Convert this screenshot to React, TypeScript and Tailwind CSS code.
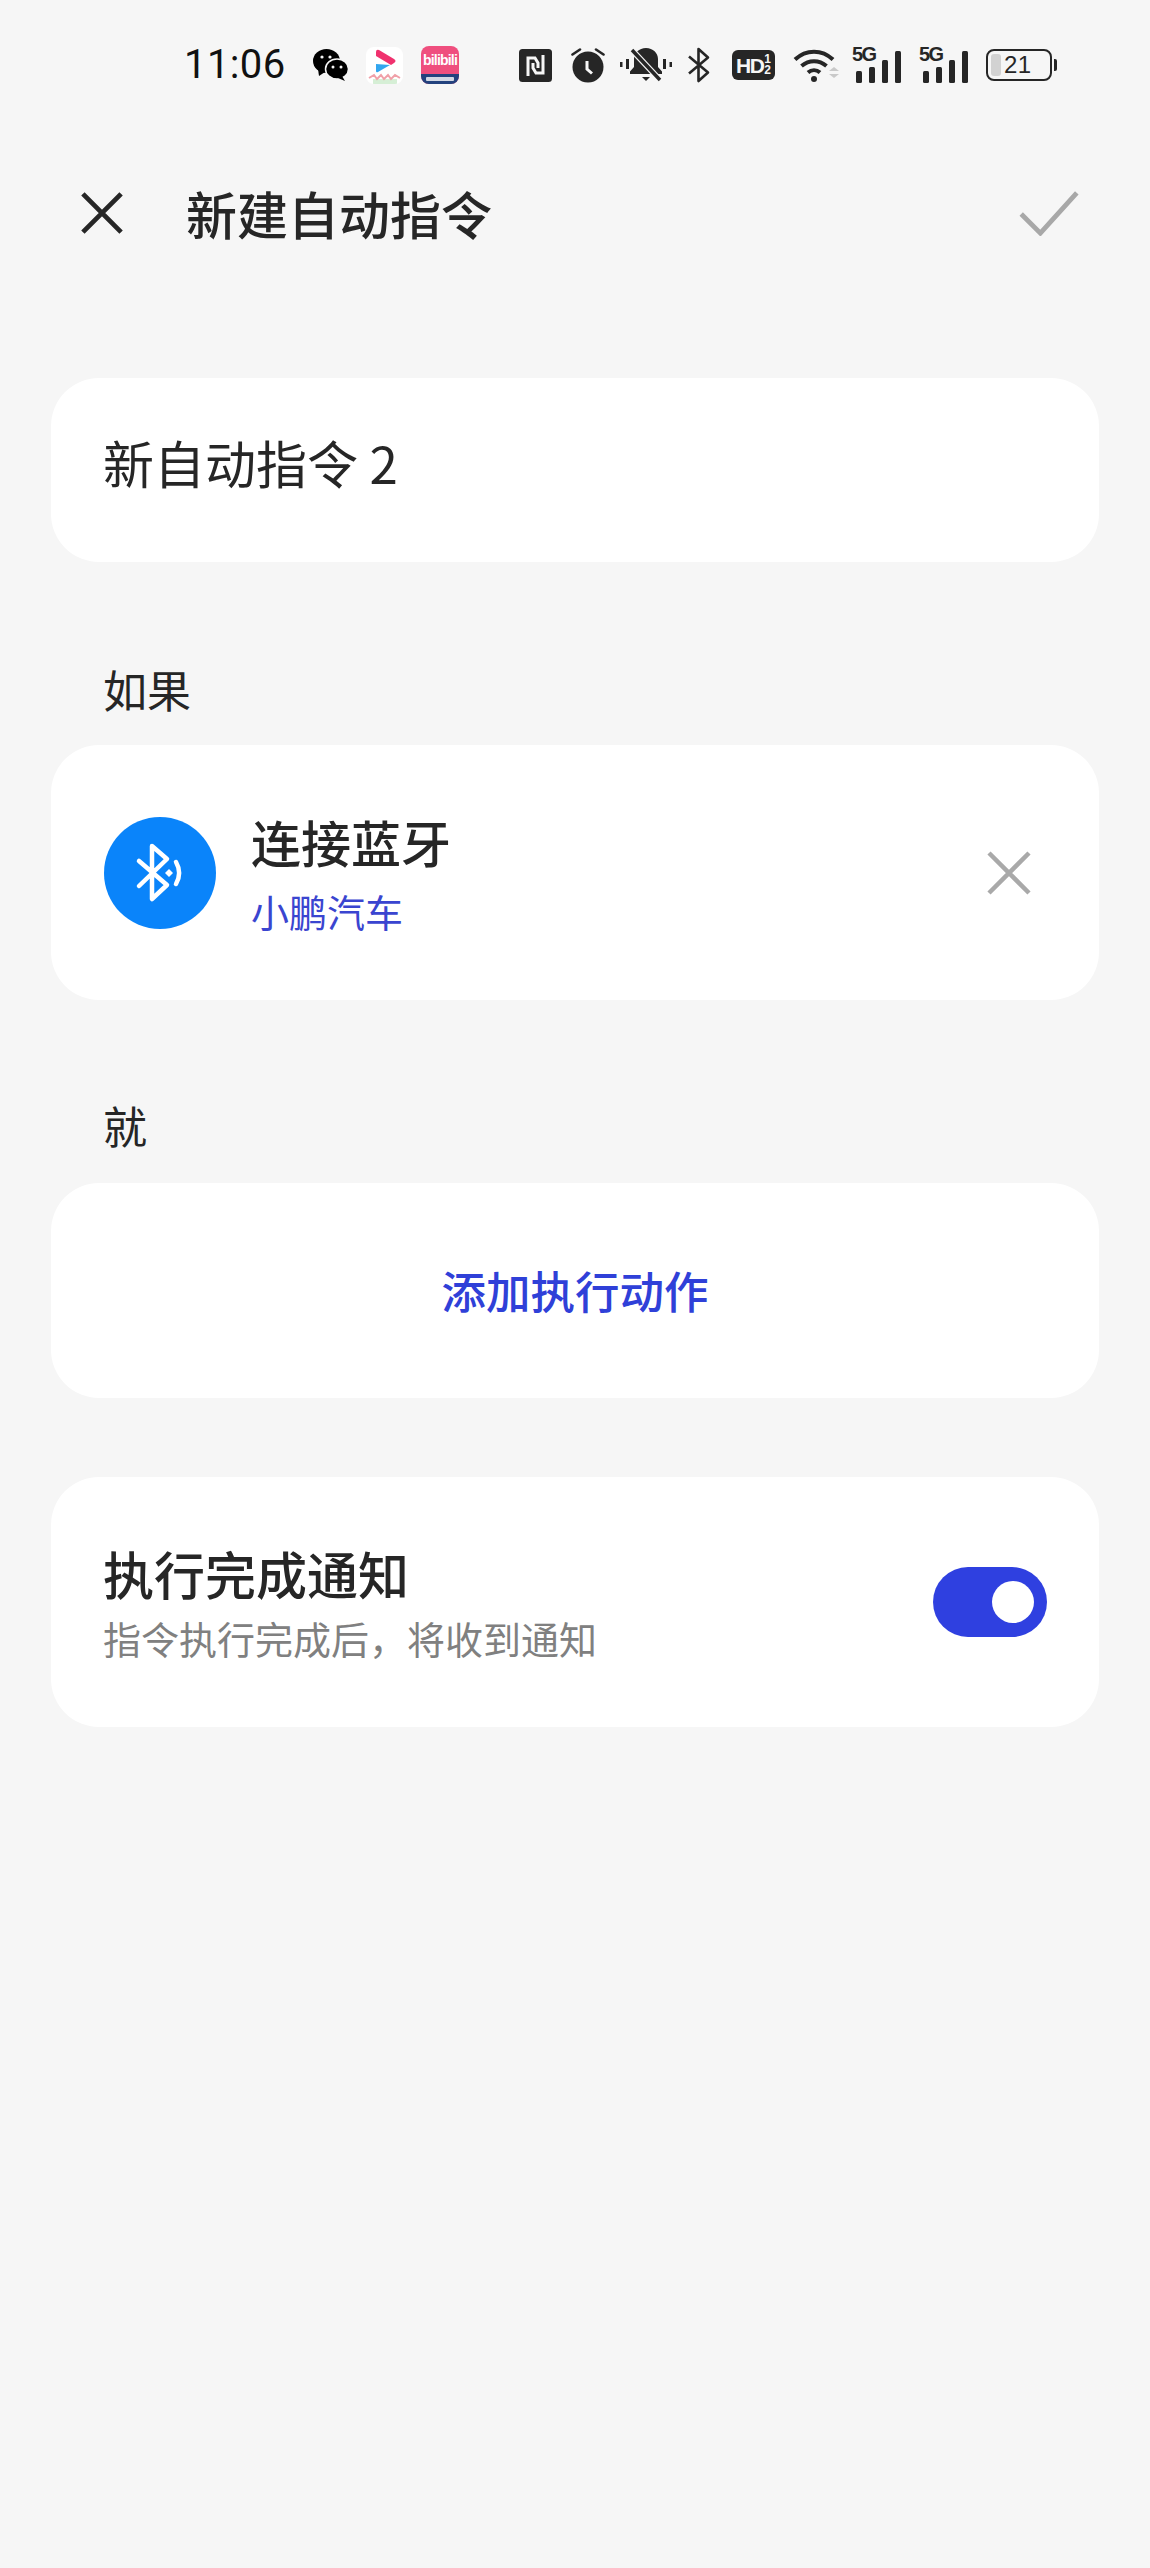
const FONT = "font-['Noto_Sans_CJK_SC','Noto_Sans',sans-serif]";

function WeChat() {
  return (
    <svg width="38" height="34" viewBox="0 0 38 34" className="ml-[25px]">
      <ellipse cx="14.5" cy="13" rx="13.5" ry="12" fill="#000" />
      <path d="M6 21l1 7 6-4z" fill="#000" />
      <ellipse cx="25" cy="21" rx="11.5" ry="10" fill="#000" stroke="#f6f6f6" strokeWidth="1.5" />
      <path d="M30 28l3 5-7-3z" fill="#000" />
      <circle cx="10" cy="9" r="1.6" fill="#f6f6f6" />
      <circle cx="18" cy="9" r="1.6" fill="#f6f6f6" />
      <circle cx="21" cy="19" r="1.5" fill="#f6f6f6" />
      <circle cx="29" cy="19" r="1.5" fill="#f6f6f6" />
    </svg>
  );
}

function VideoApp() {
  return (
    <div className="ml-[16px] w-[37px] h-[37px] rounded-[8px] bg-white overflow-hidden">
      <svg width="37" height="37" viewBox="0 0 37 37">
        <path d="M10 5q0-3 3-2l15 9q3 2 0 4l-3 2-15-9z" fill="#f0316e" />
        <path d="M10 17l14 1-12 7q-2 1-2-1z" fill="#32a6ef" />
        <rect x="7" y="32" width="24" height="5" fill="#d6efd6" />
        <path d="M3 31l5-3 3 4 4-4 3 4 4-4 3 4 4-4 5 3" fill="none" stroke="#f0a0a8" strokeWidth="2" />
      </svg>
    </div>
  );
}

function BiliApp() {
  return (
    <div className="ml-[18px] w-[38px] h-[38px] rounded-[8px] bg-[#ef4f7e] flex flex-col items-center overflow-hidden">
      <span className="font-['Liberation_Sans',sans-serif] text-white text-[14px] font-bold leading-[28px] h-[28px] tracking-[-0.8px]">bilibili</span>
      <div className="w-full flex-1 bg-[#23427e] flex items-center justify-center">
        <div className="w-[28px] h-[4px] bg-white/80 rounded-[1px]" />
      </div>
    </div>
  );
}

function NfcIcon() {
  return (
    <svg width="33" height="33" viewBox="0 0 33 33" className="ml-[60px]">
      <rect width="33" height="33" rx="3.5" fill="#262626" />
      <path d="M9 27V9h7l3 5v5M24 6v18h-7l-3-5v-5" fill="none" stroke="#f6f6f6" strokeWidth="3" />
    </svg>
  );
}

function AlarmIcon() {
  return (
    <svg width="34" height="36" viewBox="0 0 34 36" className="ml-[19px]">
      <circle cx="17" cy="20" r="15.5" fill="#262626" />
      <path d="M1.5 7.5L9 2.5M32.5 7.5L25 2.5" stroke="#262626" strokeWidth="2.6" strokeLinecap="round" />
      <path d="M16 14v8l5 4.500" fill="none" stroke="#f6f6f6" strokeWidth="3" />
    </svg>
  );
}

function MutedBell() {
  return (
    <svg width="52" height="36" viewBox="0 0 52 36" className="ml-[15px]">
      <path d="M10 27h32v-2.500l-4-4.500v-8c0-6-5-11-12-11S14 6 14 12v8l-4 4.500z" fill="#262626" />
      <path d="M22 30h8l-4 4z" fill="#262626" />
      <path d="M11 2l28 30" stroke="#f6f6f6" strokeWidth="6" />
      <path d="M12 3l28 30" stroke="#262626" strokeWidth="3.500" />
      <rect x="0" y="15" width="2.500" height="5" fill="#262626" />
      <rect x="6" y="12" width="3" height="10" fill="#262626" />
      <rect x="43" y="12" width="3" height="10" fill="#262626" />
      <rect x="49.500" y="15" width="2.500" height="5" fill="#262626" />
    </svg>
  );
}

function BluetoothGlyph() {
  return (
    <svg width="23" height="36" viewBox="0 0 23 36" className="ml-[15px]">
      <path d="M2 9.500l19 16-9.500 8.500V2l9.500 8.500L2 26.500" fill="none" stroke="#262626" strokeWidth="2.600" strokeLinejoin="round" />
    </svg>
  );
}

function HdBadge() {
  return (
    <div className="ml-[22px] w-[43px] h-[30px] rounded-[6px] bg-[#262626] flex items-center justify-center gap-[1px] text-[#f6f6f6] font-['Liberation_Sans',sans-serif] font-bold">
      <span className="text-[21px] leading-none tracking-[-1.5px]">HD</span>
      <span className="flex flex-col items-center text-[12px] leading-[11px]">
        <span>1</span>
        <span>2</span>
      </span>
    </div>
  );
}

function WifiIcon() {
  return (
    <svg width="46" height="36" viewBox="0 0 46 36" className="ml-[18px]">
      <path d="M2 12.500c11-10.500 27-10.500 38 0" fill="none" stroke="#262626" strokeWidth="4" />
      <path d="M8.500 19c7.500-6.500 17.500-6.500 25 0" fill="none" stroke="#262626" strokeWidth="4" />
      <path d="M15 25.500c3.500-3 8.500-3 12 0" fill="none" stroke="#262626" strokeWidth="4" />
      <circle cx="21" cy="32" r="3" fill="#262626" />
      <path d="M36 24l5-4 5 4zM36 27l5 4 5-4z" fill="#c9c9c9" />
    </svg>
  );
}

function Signal({ className }: { className: string }) {
  return (
    <div className={`relative w-[50px] h-[36px] ${className}`}>
      <div className="absolute inset-0 flex items-end justify-between pl-[4px] pr-[1px]">
        <div className="w-[6px] h-[12px] rounded-[1.5px] bg-[#262626]" />
        <div className="w-[6px] h-[16px] rounded-[1.5px] bg-[#262626]" />
        <div className="w-[6px] h-[23px] rounded-[1.5px] bg-[#262626]" />
        <div className="w-[6px] h-[32px] rounded-[1.5px] bg-[#262626]" />
      </div>
      <span className="absolute left-0 top-[-2px] font-['Liberation_Sans',sans-serif] font-bold text-[20px] leading-[18px] tracking-[-1.5px] text-[#262626]">5G</span>
    </div>
  );
}

function Battery() {
  return (
    <div className="ml-[17px] flex items-center">
      <div className="w-[66px] h-[32px] rounded-[8px] border-[2px] border-[#262626] pl-[3px] py-[3px] flex items-center">
        <div className="w-[10px] h-full rounded-[3px] bg-[#d2d2d2]" />
        <span className="ml-[3px] font-['Liberation_Sans',sans-serif] text-[24px] leading-none tracking-[0.5px] text-[#262626]">21</span>
      </div>
      <div className="ml-[2px] w-[3px] h-[12px] rounded-r-[2px] bg-[#262626]" />
    </div>
  );
}

function StatusBar() {
  return (
    <div className="h-[130px] pl-[184px] flex items-center">
      <span className="font-['Roboto',sans-serif] text-[40px] leading-none tracking-[0.4px] text-[#111] w-[103px]">11:06</span>
      <WeChat />
      <VideoApp />
      <BiliApp />
      <NfcIcon />
      <AlarmIcon />
      <MutedBell />
      <BluetoothGlyph />
      <HdBadge />
      <WifiIcon />
      <Signal className="ml-[13px]" />
      <Signal className="ml-[17px]" />
      <Battery />
    </div>
  );
}

function Cross({ size, color, weight }: { size: number; color: string; weight: number }) {
  return (
    <svg width={size} height={size} viewBox="0 0 44 44">
      <path d="M2 2l40 40M42 2L2 42" stroke={color} strokeWidth={weight} fill="none" />
    </svg>
  );
}

function BluetoothBadge() {
  return (
    <div className="w-[112px] h-[112px] rounded-full bg-[#0a84fa] shrink-0">
      <svg width="112" height="112" viewBox="0 0 112 112">
        <path d="M35 44l28 24-15 14V29l15 13-28 27" fill="none" stroke="#fff" strokeWidth="4.500" strokeLinejoin="round" strokeLinecap="round" />
        <path d="M65 52l4 4-4 4-4-4z" fill="#fff" />
        <path d="M72 45c4 7 4 15 0 22" fill="none" stroke="#fff" strokeWidth="4.500" strokeLinecap="round" />
      </svg>
    </div>
  );
}

export default function App() {
  return (
    <div className={`w-[1150px] h-[2568px] bg-[#f6f6f6] text-[#262626] ${FONT}`}>
      <StatusBar />

      <header className="h-[166px] pl-[81px] pr-[71px] flex items-center">
        <Cross size={42} color="#262626" weight={5} />
        <h1 className="ml-[63px] text-[51px] leading-none font-medium">新建自动指令</h1>
        <svg width="60" height="46" viewBox="0 0 62 48" className="ml-auto">
          <path d="M2 25l20 20L60 3" fill="none" stroke="#a8a8a8" strokeWidth="5" />
        </svg>
      </header>

      <main className="px-[51px] pt-[82px]">
        <section className="h-[184px] rounded-[48px] bg-white pl-[52px] flex items-center pb-[16px]">
          <span className="text-[51px] leading-none">新自动指令 2</span>
        </section>

        <h2 className="pl-[52px] pt-[105px] pb-[34px] text-[44px] leading-[44px]">如果</h2>
        <section className="h-[255px] rounded-[48px] bg-white pl-[53px] pr-[68px] flex items-center">
          <BluetoothBadge />
          <div className="ml-[35px] flex flex-col">
            <span className="text-[50px] leading-[60px] font-medium">连接蓝牙</span>
            <span className="mt-[17px] text-[38px] leading-[46px] text-[#3a45d0]">小鹏汽车</span>
          </div>
          <div className="ml-auto">
            <Cross size={44} color="#a9a9a9" weight={4.500} />
          </div>
        </section>

        <h2 className="pl-[52px] pt-[103px] pb-[36px] text-[44px] leading-[44px]">就</h2>
        <section className="h-[215px] rounded-[48px] bg-white flex items-center justify-center">
          <span className="text-[44.500px] leading-none font-medium text-[#2f40d8]">添加执行动作</span>
        </section>

        <section className="mt-[79px] h-[250px] rounded-[48px] bg-white pl-[52px] pr-[52px] flex items-center">
          <div className="flex flex-col">
            <span className="text-[51px] leading-[60px] font-medium">执行完成通知</span>
            <span className="mt-[12px] text-[38px] leading-[46px] text-[#808080]">指令执行完成后，将收到通知</span>
          </div>
          <div className="ml-auto w-[114px] h-[70px] rounded-full bg-[#2f40e0] flex items-center justify-end pr-[13px]">
            <div className="w-[42px] h-[42px] rounded-full bg-white" />
          </div>
        </section>
      </main>
    </div>
  );
}
